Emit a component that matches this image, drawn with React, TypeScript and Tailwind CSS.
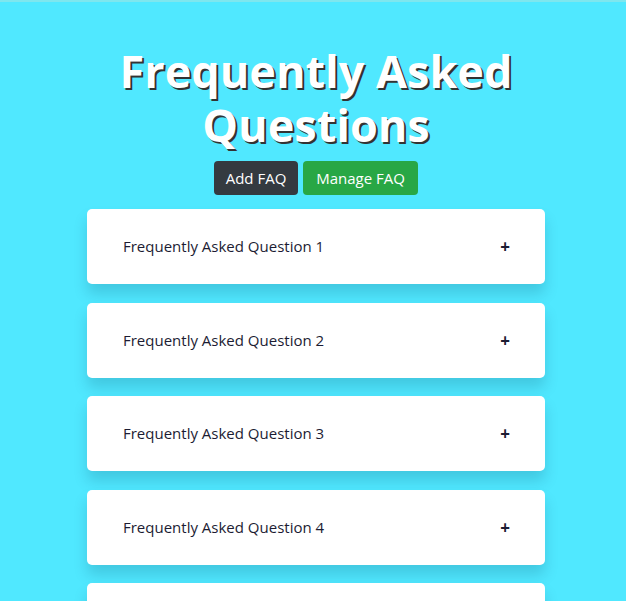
import React from 'react';

const questions = [
  'Frequently Asked Question 1',
  'Frequently Asked Question 2',
  'Frequently Asked Question 3',
  'Frequently Asked Question 4',
  'Frequently Asked Question 5',
];

const FaqItem = ({ label }: { label: string }) => (
  <div className="bg-white rounded-[5px] h-[75px] flex items-center justify-between pl-[36px] pr-[35px] shadow-[0_10px_14px_rgba(0,60,90,0.18)]">
    <span className="text-[15px] text-[#1c1c33]">{label}</span>
    <span className="text-[17px] font-bold text-[#1c1c33] leading-none">+</span>
  </div>
);

export default function App() {
  return (
    <div
      className="h-[601px] overflow-hidden bg-[#50e8ff] border-t-2 border-[#7ee6ee] pl-[6px]"
      style={{ fontFamily: '"Open Sans", "Liberation Sans", sans-serif' }}
    >
      <h1 className="text-center text-white font-bold text-[45px] leading-[54px] pt-[42px] [text-shadow:2px_2px_0_#333]">
        Frequently Asked
        <br />
        Questions
      </h1>
      <div className="flex justify-center gap-[5px] mt-[9px]">
        <button className="bg-[#343a40] text-white text-[15px] h-[34px] w-[84px] rounded-[4px]">Add FAQ</button>
        <button className="bg-[#28a745] text-white text-[15px] h-[34px] w-[115px] rounded-[4px]">Manage FAQ</button>
      </div>
      <div className="w-[458px] mx-auto mt-[14px] flex flex-col gap-[18.5px]">
        {questions.map((q) => (
          <FaqItem key={q} label={q} />
        ))}
      </div>
    </div>
  );
}
